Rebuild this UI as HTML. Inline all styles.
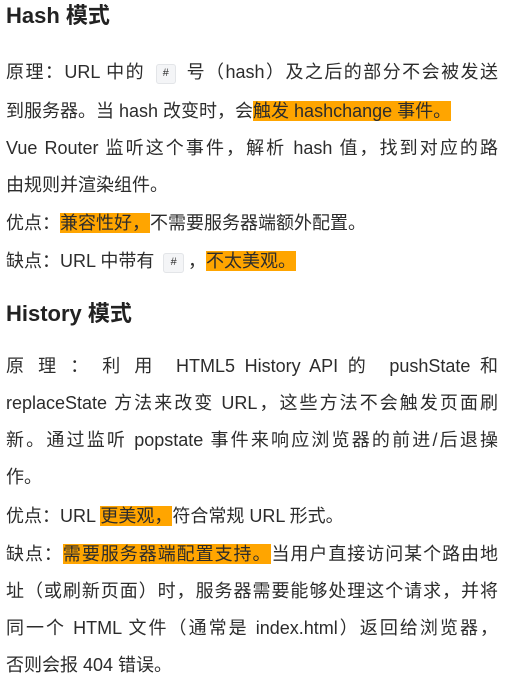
<!DOCTYPE html>
<html><head><meta charset="utf-8"><style>
body{margin:0;background:#fff;width:505px;overflow:hidden;font-family:"Liberation Sans","Noto Sans CJK SC",sans-serif;color:#2c2c2c;}
.w{padding:0 7px 0 6px;}
h2{font-size:22px;line-height:32px;margin:0;font-weight:bold;color:#222;}
p{font-size:18px;line-height:37px;margin:0 0 1px;}
.l{display:block;white-space:nowrap;}
.f{display:block;text-align:justify;text-align-last:justify;white-space:nowrap;}
.hl{background:#ffa500;}
code{font-family:"Liberation Mono",monospace;font-size:11px;background:#f4f5f7;border:1px solid #e3e5e8;border-radius:3px;padding:3px 6px;margin:0 4px;vertical-align:2px;}
</style></head><body><div class="w">
<h2>Hash 模式</h2>
<p style="margin-top:22px"><span class="f">原理：URL 中的 <code>#</code> 号（hash）及之后的部分不会被发送</span><span class="l">到服务器。当 hash 改变时，会<span class="hl">触发 hashchange 事件。</span></span><span class="f">Vue Router 监听这个事件，解析 hash 值，找到对应的路</span><span class="l">由规则并渲染组件。</span></p>
<p><span class="l">优点：<span class="hl">兼容性好，</span>不需要服务器端额外配置。</span></p>
<p><span class="l">缺点：URL 中带有 <code>#</code>，<span class="hl">不太美观。</span></span></p>
<h2 style="margin-top:16px">History 模式</h2>
<p style="margin-top:18px"><span class="f">原 理 ： 利 用 &nbsp;HTML5 History API 的 &nbsp;pushState 和</span><span class="f">replaceState 方法来改变 URL，这些方法不会触发页面刷</span><span class="f">新。通过监听 popstate 事件来响应浏览器的前进/后退操</span><span class="l">作。</span></p>
<p style="margin-top:2px"><span class="l">优点：URL <span class="hl">更美观，</span>符合常规 URL 形式。</span></p>
<p><span class="f">缺点：<span class="hl">需要服务器端配置支持。</span>当用户直接访问某个路由地</span><span class="f">址（或刷新页面）时，服务器需要能够处理这个请求，并将</span><span class="f">同一个 HTML 文件（通常是 index.html）返回给浏览器，</span><span class="l">否则会报 404 错误。</span></p>
</div></body></html>
